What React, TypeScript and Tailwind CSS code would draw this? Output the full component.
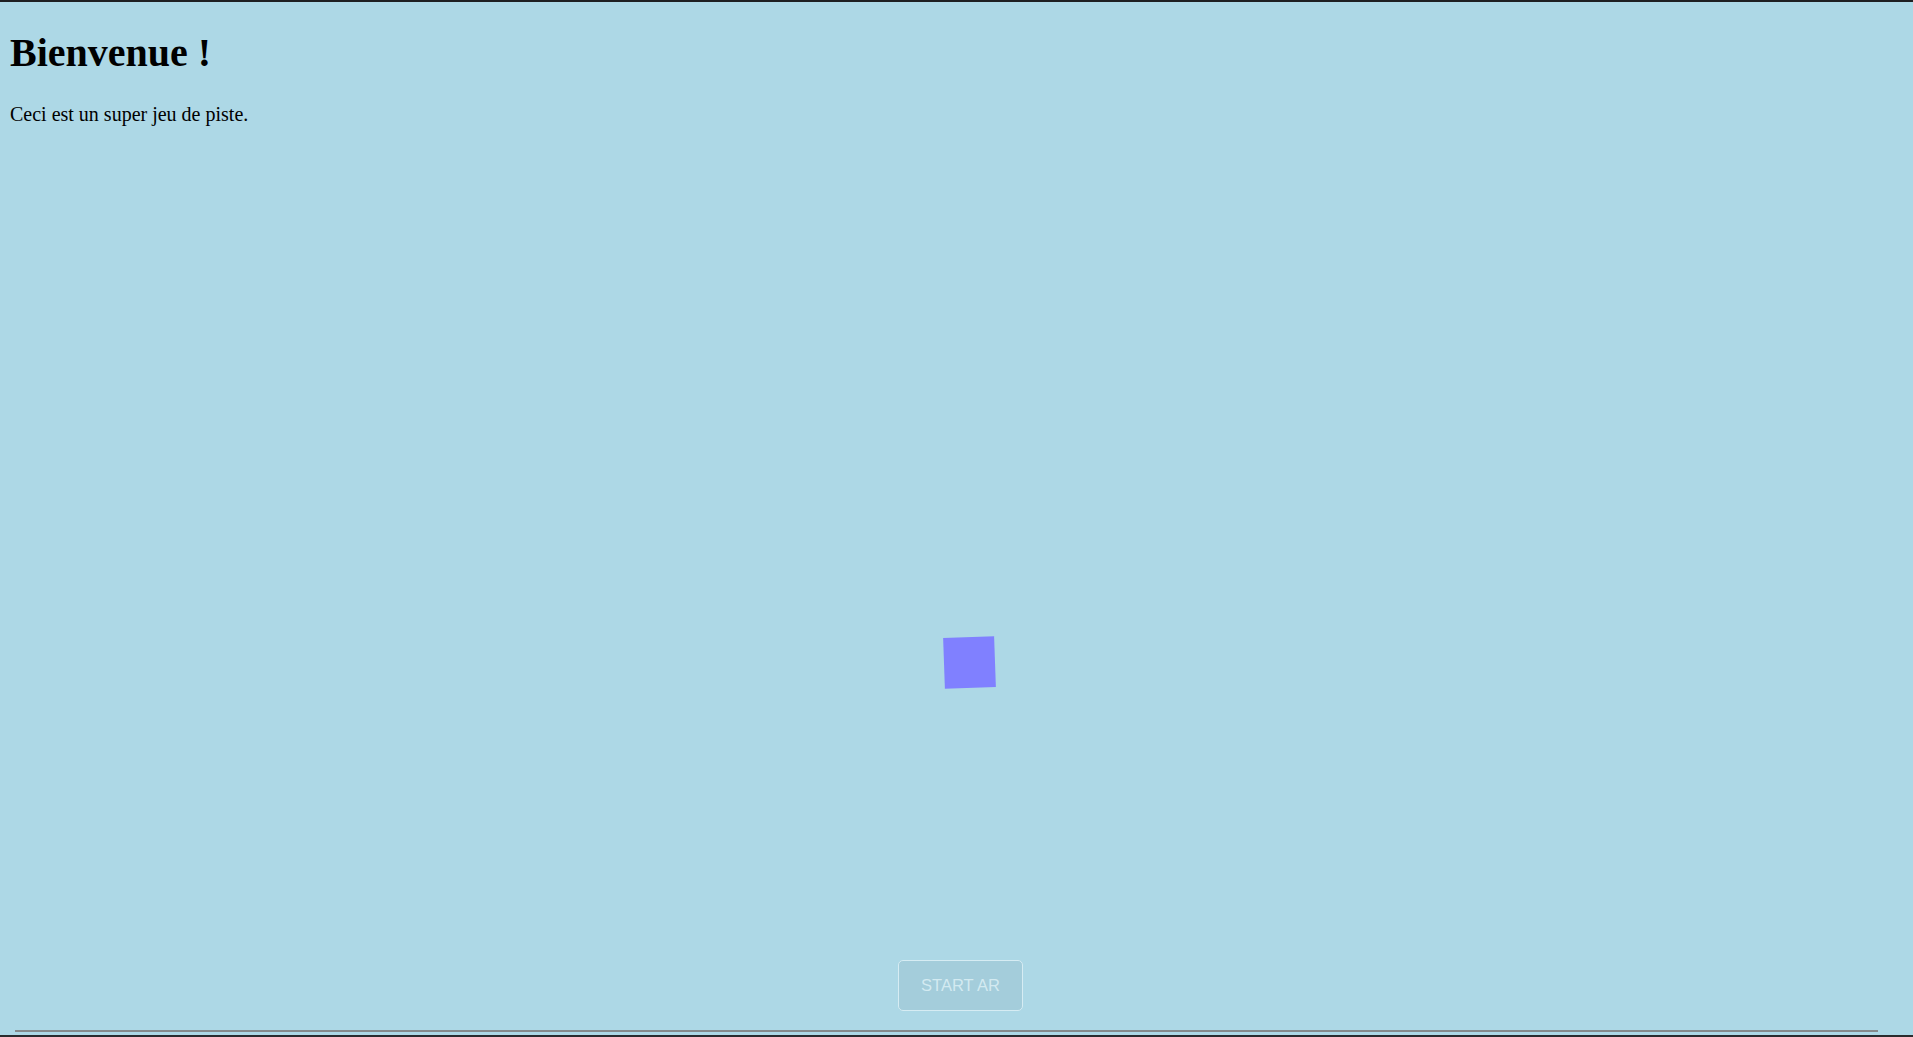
import React from 'react';

function App() {
  return (
    <div className="relative h-screen w-full flex flex-col overflow-hidden bg-[#add8e6] border-t-2 border-[#1e1f22] border-b-2 border-b-[#2a2b2e]" style={{ fontFamily: '"Liberation Serif", serif' }}>
      <div className="absolute inset-0 pointer-events-none">
        <div className="absolute left-[944px] top-[635px] w-[51px] h-[51px] bg-[#8080ff] -rotate-2" />
      </div>

      {/* Page text */}
      <div className="relative px-[10px] pt-[28px]">
        <h1 className="text-[40px] font-bold leading-[46px] text-black">Bienvenue !</h1>
        <p className="mt-[27px] text-[20px] leading-[23px] text-black">Ceci est un super jeu de piste.</p>
      </div>

      <div className="flex-1" />

      {/* Start AR button */}
      <div className="relative flex justify-center pl-[8px]">
        <button
          className="w-[125px] h-[51px] rounded-[5px] border border-[#d6ecf3] bg-[#a4cddb] text-[#d3eaf1] text-[16.5px]"
          style={{ fontFamily: '"Liberation Sans", Arial, sans-serif' }}
        >
          START AR
        </button>
      </div>

      {/* bottom rule */}
      <div className="relative mt-[19px] ml-[15px] mr-[35px] h-[2px] bg-[#858a8c]" />
      <div className="h-[3px]" />
    </div>
  );
}

export default App;
